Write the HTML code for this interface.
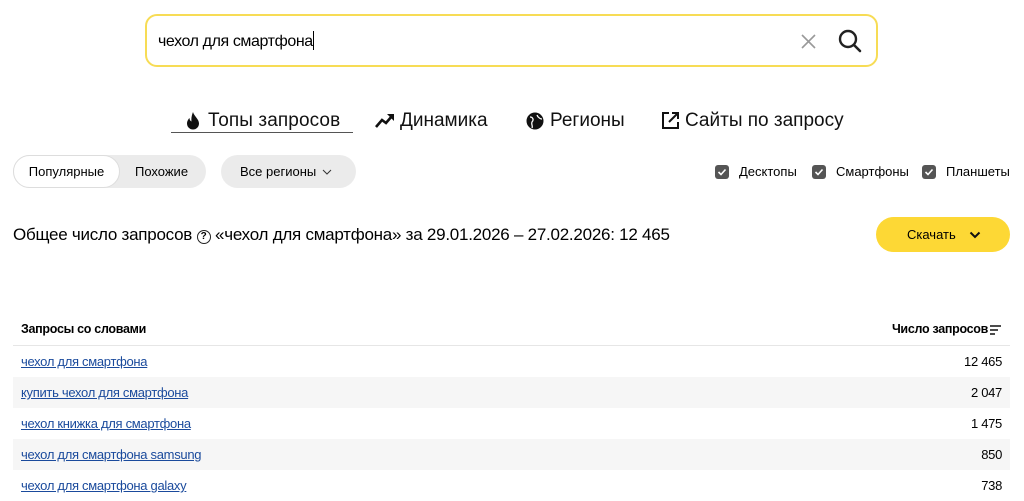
<!DOCTYPE html>
<html><head><meta charset="utf-8"><style>
*{margin:0;padding:0;box-sizing:border-box}
body{width:1024px;height:498px;overflow:hidden;background:#fff;font-family:"Liberation Sans","DejaVu Sans",sans-serif;color:#000;position:relative}
.abs{position:absolute}
.search{left:145px;top:14px;width:733px;height:53px;border:2px solid #f7dc55;border-radius:12px}
.tab{top:110px;font-size:19px;color:#111;white-space:nowrap}
.pill{top:155px;height:33px;border-radius:17px;background:#ebebeb;font-size:13px;line-height:33px}
.cb{width:14px;height:14px;background:#555;border-radius:3px;top:165px}
.cl{top:164px;font-size:13px}
.row{left:13px;width:997px;height:31px;font-size:13px;line-height:31px}
.row a{color:#1a4a9c;text-decoration:underline;position:absolute;left:8px;letter-spacing:-0.3px}
.row span{position:absolute;right:8px;letter-spacing:-0.3px}
.g{background:#f6f6f6}
</style></head><body>
<div class="abs search"></div>
<div class="abs" style="left:158px;top:31px;font-size:16px;letter-spacing:-0.4px">чехол для смартфона<span style="display:inline-block;width:1px;height:19px;background:#000;vertical-align:-4px"></span></div>
<svg class="abs" style="left:800px;top:33px" width="17" height="17"><path d="M2 2L15 15M15 2L2 15" stroke="#999" stroke-width="1.6"/></svg>
<svg class="abs" style="left:837px;top:28px" width="26" height="26"><circle cx="11" cy="11" r="8" fill="none" stroke="#222" stroke-width="2.4"/><path d="M17 17L23 23" stroke="#222" stroke-width="2.6" stroke-linecap="round"/></svg>

<svg class="abs" style="left:185px;top:111px" width="16" height="19"><path d="M8 1C9 5 14 8 14 12.5A6 6 0 0 1 2 12.5C2 10 3.5 8 4.5 7C4.5 9 5.5 10 6.5 10.5C6 7 7 3.5 8 1Z" fill="#111"/></svg>
<div class="abs tab" style="left:208px;letter-spacing:0.1px">Топы запросов</div>
<div class="abs" style="left:171px;top:132px;width:182px;height:1px;background:#555"></div>
<svg class="abs" style="left:375px;top:113px" width="20" height="16"><path d="M1 14L7 7L11 10L17 3" stroke="#111" stroke-width="2.6" fill="none"/><path d="M12 1L19 1L19 8Z" fill="#111"/></svg>
<div class="abs tab" style="left:400px">Динамика</div>
<svg class="abs" style="left:526px;top:112px" width="18" height="18"><circle cx="9" cy="9" r="8.5" fill="#111"/><path d="M4 5C7 5 8 8 6 10C5 12 7 14 6 16" stroke="#fff" stroke-width="1.3" fill="none"/><path d="M11 3C12 6 15 7 16 7" stroke="#fff" stroke-width="1.3" fill="none"/></svg>
<div class="abs tab" style="left:550px">Регионы</div>
<svg class="abs" style="left:661px;top:111px" width="19" height="19"><path d="M8 2H2V17H17V11" stroke="#111" stroke-width="2" fill="none"/><path d="M8 11L17 2M11 2H17V8" stroke="#111" stroke-width="2" fill="none"/></svg>
<div class="abs tab" style="left:685px">Сайты по запросу</div>

<div class="abs pill" style="left:13px;width:193px"></div>
<div class="abs" style="left:13px;top:155px;width:107px;height:33px;border:1px solid #ddd;border-radius:17px;background:#fff;font-size:13px;line-height:31px;text-align:center">Популярные</div>
<div class="abs" style="left:135px;top:155px;font-size:13px;line-height:33px">Похожие</div>
<div class="abs pill" style="left:221px;width:135px;padding-left:19px">Все регионы <svg width="10" height="6" style="margin-left:2px;vertical-align:1px"><path d="M1 1L5 5L9 1" stroke="#333" stroke-width="1" fill="none"/></svg></div>

<div class="abs cb" style="left:715px"><svg width="14" height="14"><path d="M3.5 7L6 9.5L10.5 4.5" stroke="#fff" stroke-width="1.6" fill="none"/></svg></div>
<div class="abs cl" style="left:739px">Десктопы</div>
<div class="abs cb" style="left:812px"><svg width="14" height="14"><path d="M3.5 7L6 9.5L10.5 4.5" stroke="#fff" stroke-width="1.6" fill="none"/></svg></div>
<div class="abs cl" style="left:836px">Смартфоны</div>
<div class="abs cb" style="left:922px"><svg width="14" height="14"><path d="M3.5 7L6 9.5L10.5 4.5" stroke="#fff" stroke-width="1.6" fill="none"/></svg></div>
<div class="abs cl" style="left:946px">Планшеты</div>

<div class="abs" style="left:13px;top:225px;font-size:17px;letter-spacing:-0.25px;white-space:nowrap">Общее число запросов <span style="display:inline-block;width:14px;height:14px;border:1.5px solid #222;border-radius:50%;font-size:10px;line-height:11px;text-align:center;vertical-align:1px;font-weight:bold">?</span> «чехол для смартфона» за 29.01.2026 – 27.02.2026: 12 465</div>
<div class="abs" style="left:876px;top:217px;width:134px;height:35px;border-radius:18px;background:#fdd835;font-size:13px;line-height:35px;padding-left:31px">Скачать <svg width="12" height="8" style="margin-left:10px"><path d="M1.5 1.5L6 6L10.5 1.5" stroke="#111" stroke-width="2" fill="none"/></svg></div>

<div class="abs row" style="top:314px;font-weight:bold;font-size:12.5px"><span style="left:8px;right:auto">Запросы со словами</span><span style="right:22px">Число запросов</span><svg style="position:absolute;right:9px;top:11px" width="11" height="10"><path d="M0 1H11M0 5H8M0 9H5" stroke="#111" stroke-width="1.6"/></svg></div>
<div class="abs" style="left:13px;top:345px;width:997px;height:1px;background:#e6e6e6"></div>
<div class="abs row" style="top:346px"><a>чехол для смартфона</a><span>12 465</span></div>
<div class="abs row g" style="top:377px"><a>купить чехол для смартфона</a><span>2 047</span></div>
<div class="abs row" style="top:408px"><a>чехол книжка для смартфона</a><span>1 475</span></div>
<div class="abs row g" style="top:439px"><a>чехол для смартфона samsung</a><span>850</span></div>
<div class="abs row" style="top:470px"><a>чехол для смартфона galaxy</a><span>738</span></div>
</body></html>
